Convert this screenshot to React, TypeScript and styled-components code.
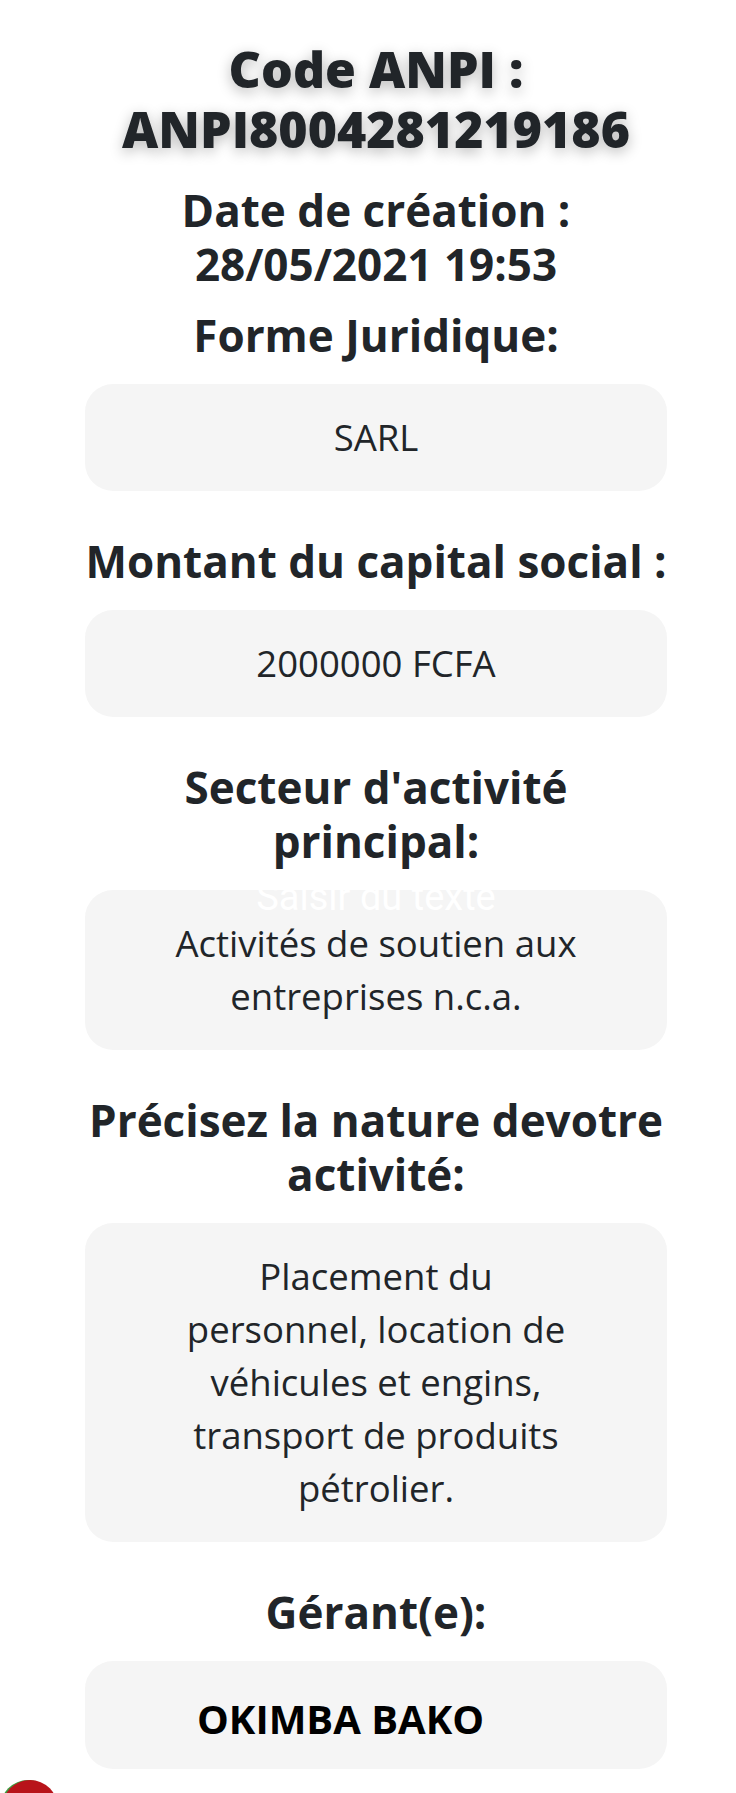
import React from 'react';
import styled, { createGlobalStyle } from 'styled-components';

const GlobalStyle = createGlobalStyle`
  html, body {
    margin: 0;
    padding: 0;
    background: #ffffff;
  }
  body {
    font-family: 'Open Sans', 'Liberation Sans', sans-serif;
    color: #212529;
  }
`;

const Page = styled.div`
  width: 582px;
  margin-left: 85px;
  padding-top: 39px;
  padding-bottom: 26px;
  display: flex;
  flex-direction: column;
`;

const Title = styled.h1`
  margin: 0 0 24px;
  font-size: 50px;
  font-weight: 800;
  line-height: 60px;
  text-align: center;
  white-space: pre-line;
  color: #212529;
  text-shadow: 0 4px 14px rgba(0, 0, 0, 0.28);
`;

const Created = styled.h2`
  margin: 0 0 17px;
  font-size: 44px;
  font-weight: 700;
  line-height: 54px;
  text-align: center;
  white-space: pre-line;
  color: #212529;
`;

const Label = styled.h3`
  margin: 0 0 22px;
  font-size: 44px;
  font-weight: 700;
  line-height: 54px;
  text-align: center;
  white-space: pre-line;
  color: #212529;
`;

const Box = styled.div<{ $strong?: boolean }>`
  position: relative;
  margin-bottom: 43px;
  padding: ${({ $strong }) => ($strong ? '31px 24px 24px 112px' : '27px 24px')};
  background: #f5f5f5;
  border-radius: 28px;
  font-size: ${({ $strong }) => ($strong ? '40px' : '36.5px')};
  font-weight: ${({ $strong }) => ($strong ? 700 : 400)};
  line-height: 53px;
  text-align: ${({ $strong }) => ($strong ? 'left' : 'center')};
  white-space: pre-line;
  color: ${({ $strong }) => ($strong ? '#000000' : '#212529')};

  &:last-child {
    margin-bottom: 0;
  }
`;

const Placeholder = styled.span`
  position: absolute;
  left: 0;
  right: 0;
  top: -13px;
  font-family: Roboto, 'Liberation Sans', sans-serif;
  font-size: 38px;
  font-weight: 400;
  line-height: 40px;
  text-align: center;
  color: #ffffff;
  pointer-events: none;
`;

const FloatingButton = styled.div`
  position: absolute;
  top: 1780px;
  left: 2px;
  width: 56px;
  height: 56px;
  border-radius: 50%;
  background: #b8141a;
  box-shadow: -2px 0 0 #3f9b3f;
`;

interface Field {
  label: string;
  value: string;
  placeholder?: string;
  strong?: boolean;
}

const fields: Field[] = [
  { label: 'Forme Juridique:', value: 'SARL' },
  { label: 'Montant du capital social :', value: '2000000 FCFA' },
  {
    label: "Secteur d'activité\nprincipal:",
    value: 'Activités de soutien aux\nentreprises n.c.a.',
    placeholder: 'Saisir du texte',
  },
  {
    label: 'Précisez la nature devotre\nactivité:',
    value:
      'Placement du\npersonnel, location de\nvéhicules et engins,\ntransport de produits\npétrolier.',
  },
  { label: 'Gérant(e):', value: 'OKIMBA BAKO', strong: true },
];

const App = () => {
  return (
    <>
      <GlobalStyle />
      <Page>
        <Title>{'Code ANPI :\nANPI8004281219186'}</Title>
        <Created>{'Date de création :\n28/05/2021 19:53'}</Created>
        {fields.map((f) => (
          <React.Fragment key={f.label}>
            <Label>{f.label}</Label>
            <Box $strong={f.strong}>
              {f.placeholder && <Placeholder>{f.placeholder}</Placeholder>}
              {f.value}
            </Box>
          </React.Fragment>
        ))}
      </Page>
      <FloatingButton />
    </>
  );
};

export default App;
